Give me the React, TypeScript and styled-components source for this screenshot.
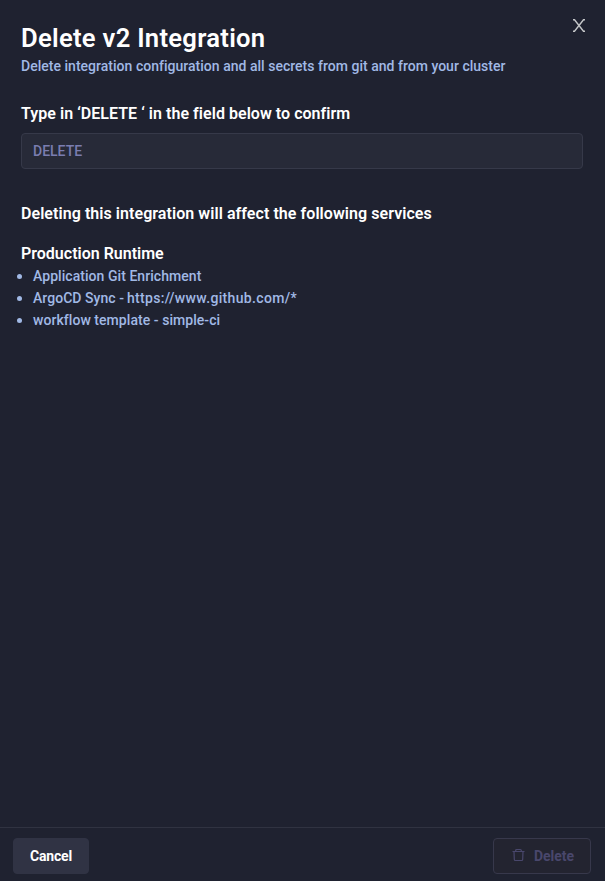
import React from "react";
import styled, { createGlobalStyle } from "styled-components";

const GlobalStyle = createGlobalStyle`
  * { box-sizing: border-box; }
  body { margin: 0; background: #1f2230; }
`;

const Drawer = styled.main`
  display: flex;
  flex-direction: column;
  height: 881px;
  background: #1f2230;
  color: #fff;
  font-family: Roboto, "Liberation Sans", sans-serif;
  font-weight: 500;
`;

const Header = styled.header`
  display: flex;
  justify-content: space-between;
  align-items: flex-start;
  padding: 18px 20px 0 21px;
`;

const Title = styled.h1`
  height: 38px;
  margin: 0;
  padding-top: 1px;
  font-size: 25.6px;
  font-weight: 600;
  line-height: 38px;
  letter-spacing: 0.28px;
  white-space: nowrap;
`;

const Subtitle = styled.p`
  margin: 0;
  color: #a1b9e5;
  font-size: 14px;
  line-height: 20px;
  letter-spacing: 0.02px;
  white-space: nowrap;
`;

const CloseButton = styled.button`
  display: flex;
  padding: 0;
  margin-top: 1px;
  border: 0;
  background: none;
  color: #c4c6c8;
`;

const Content = styled.section`
  flex: 1;
  padding: 28px 22px 0 21px;
`;

const Heading = styled.h2<{ $top?: number; $tracking?: number }>`
  margin: ${({ $top = 0 }) => $top}px 0 0;
  font-size: 16px;
  font-weight: 600;
  line-height: 20px;
  letter-spacing: ${({ $tracking = 0 }) => $tracking}px;
  white-space: nowrap;
`;

const ConfirmInput = styled.input`
  display: block;
  width: 100%;
  height: 36px;
  margin-top: 9px;
  padding: 0 11px;
  border: 1px solid #363949;
  border-radius: 4px;
  outline: 0;
  background: #272a38;
  font: 500 14px Roboto, "Liberation Sans", sans-serif;
  &::placeholder { color: #7a7db0; opacity: 1; }
`;

const ServiceList = styled.ul`
  margin: 1px 0 0;
  padding: 0 0 0 12px;
  list-style: none;
  color: #a1b9e5;
  font-size: 14px;
  line-height: 22px;
`;

const Service = styled.li<{ $tracking: number }>`
  display: flex;
  align-items: center;
  letter-spacing: ${({ $tracking }) => $tracking}px;
  &::before {
    content: "";
    width: 5px;
    height: 5px;
    margin: 0 11px 0 -16px;
    border-radius: 50%;
    background: currentColor;
  }
`;

const ServiceUrl = styled.span`
  margin-left: -1px;
  letter-spacing: 0.34px;
  white-space: pre;
`;

const Footer = styled.footer`
  display: flex;
  justify-content: space-between;
  height: 54px;
  padding: 10px 14px 0 13px;
  border-top: 1px solid #303341;
`;

const Button = styled.button<{ $outlined?: boolean }>`
  display: flex;
  align-items: center;
  justify-content: center;
  gap: 9px;
  width: ${({ $outlined }) => ($outlined ? 98 : 76)}px;
  height: 36px;
  padding: ${({ $outlined }) => ($outlined ? "0 0 0 1px" : "0")};
  border: 1px solid ${({ $outlined }) => ($outlined ? "#37384b" : "#303344")};
  border-radius: 4px;
  background: ${({ $outlined }) => ($outlined ? "#232430" : "#303344")};
  color: ${({ $outlined }) => ($outlined ? "#49476c" : "#fff")};
  font: 700 14px Roboto, "Liberation Sans", sans-serif;
  letter-spacing: ${({ $outlined }) => ($outlined ? 0 : -0.2)}px;
`;

const CloseIcon = () => (
  <svg width="12" height="13" viewBox="0 0 12 13" fill="none" stroke="currentColor" strokeWidth="1.4">
    <path d="M0 .8h1.5l9 11.4H12M12 .8h-1.5l-9 11.4H0" />
  </svg>
);

const TrashGlyph = styled.svg`
  margin-bottom: 2px;
`;

const TrashIcon = () => (
  <TrashGlyph width="14" height="14" viewBox="0 0 14 14" fill="none" stroke="currentColor" strokeWidth="1.2">
    <path d="M1.5 3.5h12M4.7 3.5v-1q0-1 1-1h3.6q1 0 1 1v1M3 3.5l.3 8q.1 1 1 1h6.4q.9 0 1-1l.3-8" />
  </TrashGlyph>
);

const services = [
  { name: "Application Git Enrichment", tracking: 0.05 },
  { name: "ArgoCD Sync -", url: " https://www.github.com/*", tracking: 0.05 },
  { name: "workflow template - simple-ci", tracking: 0.05 },
];

export default function App() {
  return (
    <Drawer>
      <GlobalStyle />
      <Header>
        <div>
          <Title>Delete v2 Integration</Title>
          <Subtitle>Delete integration configuration and all secrets from git and from your cluster</Subtitle>
        </div>
        <CloseButton aria-label="Close"><CloseIcon /></CloseButton>
      </Header>
      <Content>
        <Heading $tracking={0.04}>Type in ‘DELETE ‘ in the field below to confirm</Heading>
        <ConfirmInput placeholder="DELETE" />
        <Heading $top={35} $tracking={0.06}>Deleting this integration will affect the following services</Heading>
        <Heading $top={20}>Production Runtime</Heading>
        <ServiceList>
          {services.map((s) => (
            <Service key={s.name} $tracking={s.tracking}>
              {s.name}
              {s.url && <ServiceUrl>{s.url}</ServiceUrl>}
            </Service>
          ))}
        </ServiceList>
      </Content>
      <Footer>
        <Button>Cancel</Button>
        <Button $outlined disabled><TrashIcon />Delete</Button>
      </Footer>
    </Drawer>
  );
}
